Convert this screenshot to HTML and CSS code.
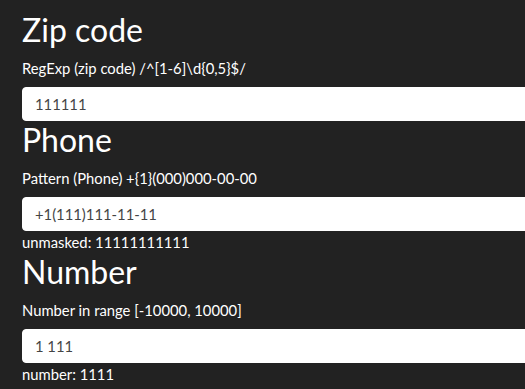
FILE: index.html
```html
<!DOCTYPE html>
<html>
<head>
<meta charset="utf-8">
<link rel="stylesheet" href="styles.css">
</head>
<body>
<main class="page">
  <section class="field">
    <h2 class="title">Zip code</h2>
    <label class="label">RegExp (zip code) /^[1-6]\d{0,5}$/</label>
    <input class="control" type="text" value="111111">
  </section>
  <section class="field">
    <h2 class="title">Phone</h2>
    <label class="label">Pattern (Phone) +{1}(000)000-00-00</label>
    <input class="control" type="text" value="+1(111)111-11-11">
    <div class="note">unmasked: 11111111111</div>
  </section>
  <section class="field">
    <h2 class="title">Number</h2>
    <label class="label">Number in range [-10000, 10000]</label>
    <input class="control" type="text" value="1 111">
    <div class="note">number: 1111</div>
  </section>
</main>
</body>
</html>
```
FILE: styles.css
```css
html, body {
  overflow: hidden;
}
body {
  margin: 0;
  background: #222222;
  color: #ffffff;
  font-family: Lato, "Liberation Sans", sans-serif;
  font-size: 14.8px;
  line-height: 22px;
}
.page {
  width: 620px;
  padding: 11px 0 0 22px;
}
.field {
  display: flex;
  flex-direction: column;
  align-items: stretch;
}
.title {
  margin: 0 0 8px;
  font-size: 32px;
  line-height: 38px;
  font-weight: 400;
}
.label {
  display: block;
  margin-bottom: 8px;
}
.control {
  box-sizing: border-box;
  height: 34px;
  margin: 0;
  padding: 0 12px;
  border: 1px solid #ffffff;
  border-radius: 4px;
  background: #ffffff;
  color: #444444;
  font-family: Lato, "Liberation Sans", sans-serif;
  font-size: 14.8px;
  outline: none;
}
.note {
  line-height: 22px;
}
```
